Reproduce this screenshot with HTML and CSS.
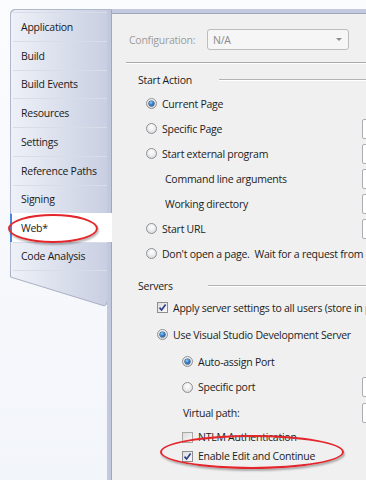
FILE: index.html
```html
<!DOCTYPE html>
<html>
<head>
<meta charset="utf-8">
<link rel="stylesheet" href="styles.css">
</head>
<body>
<div class="window">
  <nav class="sidebar">
    <ul class="tabs">
      <li class="tab">Application</li>
      <li class="tab">Build</li>
      <li class="tab">Build Events</li>
      <li class="tab">Resources</li>
      <li class="tab">Settings</li>
      <li class="tab">Reference Paths</li>
      <li class="tab">Signing</li>
      <li class="tab selected">Web*</li>
      <li class="tab last">Code Analysis</li>
    </ul>
    <svg class="tabs-end" width="102" height="38" viewBox="0 0 102 38">
      <defs>
        <linearGradient id="tabgrad" x1="0" y1="0" x2="97" y2="0" gradientUnits="userSpaceOnUse">
          <stop offset="0" stop-color="#eef1f8"/>
          <stop offset="1" stop-color="#c9cfe2"/>
        </linearGradient>
      </defs>
      <path d="M0 0 V6 L93 34.5 Q97 35.5 97 31 V0 Z" fill="url(#tabgrad)"/>
      <path d="M0.5 0 V6 L93 34.5 Q96.5 35.5 96.5 31" fill="none" stroke="#a9afc3" stroke-width="1"/>
    </svg>
  </nav>

  <main class="main">
    <div class="panel">
      <div class="config">
        <span class="config-label">Configuration:</span>
        <div class="select"><span>N/A</span><span class="arrow"></span></div>
      </div>
      <div class="rule"></div>

      <section class="group">
        <div class="group-head"><span>Start Action</span><span class="head-line start-line"></span></div>
        <div class="rows start-rows">
          <div class="row"><label class="opt"><span class="radio on"></span>Current Page</label></div>
          <div class="row"><label class="opt"><span class="radio"></span>Specific Page</label><span class="textbox"></span></div>
          <div class="row"><label class="opt"><span class="radio"></span>Start external program</label><span class="textbox"></span></div>
          <div class="row"><span class="sub">Command line arguments</span><span class="textbox"></span></div>
          <div class="row"><span class="sub">Working directory</span><span class="textbox"></span></div>
          <div class="row"><label class="opt"><span class="radio"></span>Start URL</label><span class="textbox"></span></div>
          <div class="row"><label class="opt"><span class="radio"></span>Don't open a page.&nbsp; Wait for a request from an external application.</label></div>
        </div>
      </section>

      <section class="group servers">
        <div class="group-head"><span>Servers</span><span class="head-line servers-line"></span></div>
        <div class="rows server-rows">
          <div class="row r27"><label class="opt lvl1"><span class="check"><svg width="9" height="9" viewBox="0 0 9 9"><path d="M1.5 4.6 L3.6 7 L7.6 1.6" fill="none" stroke="#2b3a86" stroke-width="1.6"/></svg></span>Apply server settings to all users (store in project file)</label></div>
          <div class="row r27"><label class="opt lvl1"><span class="radio on"></span>Use Visual Studio Development Server</label></div>
          <div class="row r27"><label class="opt lvl2"><span class="radio on"></span>Auto-assign Port</label></div>
          <div class="row r24"><label class="opt lvl2"><span class="radio"></span>Specific port</label><span class="textbox"></span></div>
          <div class="row r27"><span class="vpath">Virtual path:</span><span class="textbox"></span></div>
          <div class="row r22"><label class="opt lvl2"><span class="check off"></span>NTLM Authentication</label></div>
          <div class="row r16"><label class="opt lvl2"><span class="check"><svg width="9" height="9" viewBox="0 0 9 9"><path d="M1.5 4.6 L3.6 7 L7.6 1.6" fill="none" stroke="#2b3a86" stroke-width="1.6"/></svg></span>Enable Edit and Continue</label></div>
        </div>
      </section>
    </div>
  </main>

  <div class="callout callout-web"></div>
  <div class="callout callout-edit"></div>
</div>
</body>
</html>
```

FILE: styles.css
```css
* { box-sizing: border-box; }

html, body {
  margin: 0;
  padding: 0;
}

body {
  width: 366px;
  height: 480px;
  overflow: hidden;
  background: linear-gradient(#fbfcfe, #f2f5fa);
  font-family: "Open Sans", "Noto Sans", sans-serif;
  font-size: 10.5px;
  letter-spacing: -0.25px;
  color: #1c1c1c;
}

.window {
  display: flex;
  height: 480px;
  position: relative;
}

/* ---------- sidebar tabs ---------- */
.sidebar {
  flex: 0 0 102px;
  margin: 9px 0 0 10px;
  display: flex;
  flex-direction: column;
  background: linear-gradient(to right, transparent 97px, #c3c9de 97px, #c1c7dc 101px, #a2a8ba 101px);
}

.tabs {
  list-style: none;
  margin: 0;
  padding: 3px 0 0 0;
  border-top-left-radius: 5px;
  background: linear-gradient(to right, #eef1f8 0, #c9cfe2 97px, #c3c9de 97px, #c1c7dc 101px, #a2a8ba 101px);
  box-shadow: inset 1px 1px 0 #b2b8cc;
}

.tab {
  height: 28.75px;
  margin: 0 5px 0 3px;
  padding-left: 8px;
  border-top: 1px solid #d8dce8;
  display: flex;
  align-items: center;
  color: #1a1a1a;
}

.tab.last {
  border-bottom: 1px solid #d8dce8;
}

.tab.selected {
  margin: 0;
  padding-left: 9px;
  border-top-color: transparent;
  border-left: 2px solid #4a88dc;
  background: #fff;
}

.tabs-end {
  display: block;
}

/* ---------- main panel ---------- */
.main {
  flex: 1;
  min-width: 0;
  margin-top: 9px;
  padding-top: 4px;
  background: #c3c9de;
  overflow: hidden;
  display: flex;
  flex-direction: column;
}

.panel {
  flex: 1;
  background: #f0f0f0;
  border-top: 1px solid #a2a8ba;
  white-space: nowrap;
}

.config {
  display: flex;
  align-items: center;
  height: 21px;
  margin: 15px 0 0 17px;
}

.config-label {
  width: 78px;
  color: #9c9c9c;
}

.select {
  width: 142px;
  height: 21px;
  border: 1px solid #bdbdbd;
  border-radius: 3px;
  background: #f6f6f6;
  color: #8a8a8a;
  display: flex;
  align-items: center;
  justify-content: space-between;
  padding: 0 6px 0 5px;
}

.arrow {
  width: 0;
  height: 0;
  border-left: 3px solid transparent;
  border-right: 3px solid transparent;
  border-top: 3px solid #8c8c8c;
}

.rule {
  margin: 12px 0 0 14px;
  border-top: 1px solid #a9a9a9;
  border-bottom: 1px solid #fff;
}

.group {
  margin-left: 26px;
}

.group-head {
  display: flex;
  align-items: center;
  height: 16px;
  margin-top: 8px;
}

.servers .group-head {
  margin-top: 12px;
}

.head-line {
  flex: 1;
  border-top: 1px solid #b3b3b3;
  border-bottom: 1px solid #fff;
}

.start-line { margin-left: 27px; }
.servers-line { margin-left: 35px; }

.start-rows { margin-top: 3px; }

.row {
  height: 25px;
  display: grid;
  grid-template-columns: 224px 80px;
  align-items: center;
}

.r27 { height: 27px; }
.r24 { height: 24px; }
.r22 { height: 22px; }
.r16 { height: 16px; }

.opt {
  display: flex;
  align-items: center;
  gap: 5px;
  padding-left: 8px;
}

.opt.lvl1 { padding-left: 19px; }
.opt.lvl2 { padding-left: 44px; }

.sub { padding-left: 27px; }
.vpath { padding-left: 45px; }

.textbox {
  height: 20px;
  border: 1px solid #abadb3;
  border-radius: 2px;
  background: #fff;
}

.radio {
  flex: 0 0 11px;
  width: 11px;
  height: 11px;
  border-radius: 50%;
  border: 1px solid #8d9196;
  background: radial-gradient(circle at 50% 35%, #ffffff 0, #ececec 50%, #cfcfcf 100%);
  display: grid;
  place-items: center;
}

.radio.on::after {
  content: "";
  width: 5px;
  height: 5px;
  border-radius: 50%;
  background: radial-gradient(circle at 40% 35%, #9ad6ff 0, #2d7ccc 45%, #0d3f7f 100%);
  box-shadow: 0 0 0 0.6px #1a426e;
}

.check {
  flex: 0 0 11px;
  width: 11px;
  height: 11px;
  border: 1px solid #8e8e8e;
  background: linear-gradient(135deg, #dcdcdc, #fbfbfb);
  display: grid;
  place-items: center;
}

.check svg { display: block; }

.check.off {
  border-color: #a8a8a8;
}

/* ---------- red annotation ellipses ---------- */
.callout {
  position: absolute;
  border: 2px solid #e3262b;
  border-radius: 50%;
  box-shadow: 1px 2px 2px rgba(0, 0, 0, 0.28);
}

.callout-web {
  left: 8px;
  top: 214px;
  width: 90px;
  height: 29px;
}

.callout-edit {
  left: 160px;
  top: 435px;
  width: 184px;
  height: 34px;
}
```
